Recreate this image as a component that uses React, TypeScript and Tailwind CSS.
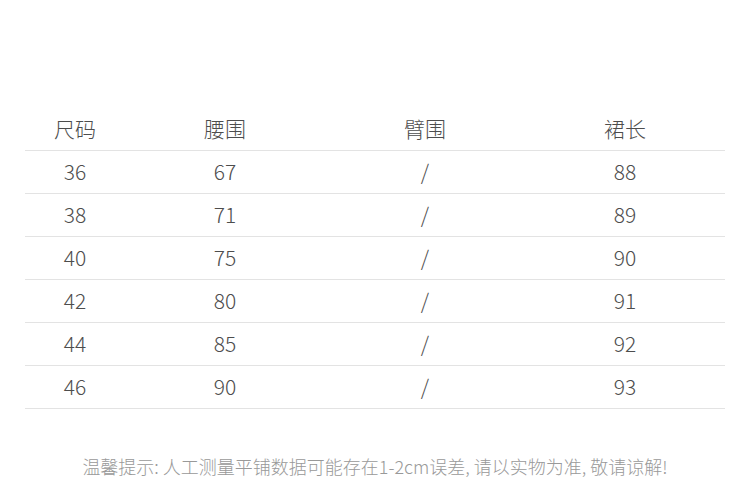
const rows = [
  ['36', '67', '/', '88'],
  ['38', '71', '/', '89'],
  ['40', '75', '/', '90'],
  ['42', '80', '/', '91'],
  ['44', '85', '/', '92'],
  ['46', '90', '/', '93'],
];

const headers = ['尺码', '腰围', '臂围', '裙长'];
const cols = ['w-[100px]', 'w-[200px]', 'w-[200px]', 'w-[200px]'];

export default function App() {
  return (
    <div
      className="w-[750px] h-[478px] bg-white overflow-hidden"
      style={{ fontFamily: '"Noto Sans CJK SC", "Noto Sans", sans-serif' }}
    >
      <div className="pt-[108px] px-[25px]">
        <div className="flex h-[43px] items-center border-b border-[#e3e3e3] text-[#4d4d4d] text-[21px] font-light">
          {headers.map((h, i) => (
            <div key={h} className={`${cols[i]} text-center`}>{h}</div>
          ))}
        </div>
        {rows.map((r, ri) => (
          <div key={ri} className="flex h-[43px] items-center border-b border-[#e3e3e3] text-[#4d4d4d] text-[21px] font-light">
            {r.map((c, i) => (
              <div key={i} className={`${cols[i]} text-center`}>{c}</div>
            ))}
          </div>
        ))}
      </div>
      <div className="mt-[44px] text-center text-[#999] text-[18px] font-light">
        温馨提示: 人工测量平铺数据可能存在1-2cm误差, 请以实物为准, 敬请谅解!
      </div>
    </div>
  );
}
